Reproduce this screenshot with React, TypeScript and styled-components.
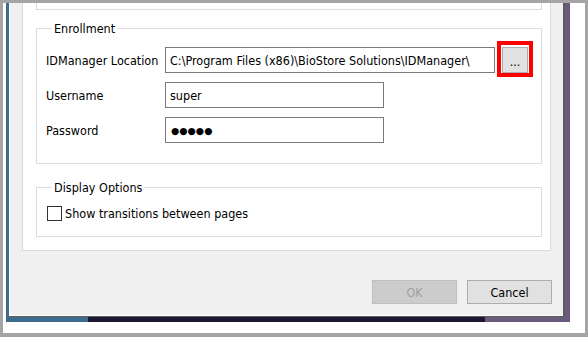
import React, { FC } from 'react';
import styled, { createGlobalStyle } from 'styled-components';

const GlobalStyle = createGlobalStyle`
  html, body {
    margin: 0;
    padding: 0;
  }
  body {
    width: 588px;
    height: 337px;
    overflow: hidden;
    font-family: 'DejaVu Sans Condensed', 'DejaVu Sans', sans-serif;
    font-size: 12.5px;
    color: #000;
  }
`;

const Frame = styled.div`
  box-sizing: border-box;
  width: 588px;
  height: 337px;
  display: flex;
  border: 3px solid #a5a5a5;
  border-bottom-width: 4px;
  background: #fff;
  padding: 0 15px 11px 3px;
`;

const Desktop = styled.div`
  flex: 1;
  display: flex;
  padding: 0 5px 5px 3px;
  background: linear-gradient(
    to right,
    #3c6b8d 0 82px,
    #1c1631 82px 479px,
    #6b5b7e 479px
  );
`;

const Dialog = styled.div`
  flex: 1;
  display: flex;
  flex-direction: column;
  background: #f0f0f0;
  border-right: 2px solid #5c5c5c;
  border-bottom: 1px solid #5c5c5c;
  box-shadow: inset 1px 0 #fff, inset 0 -1px #fff;
  padding: 0 12px 12px 13px;
`;

const Page = styled.div`
  display: flex;
  flex-direction: column;
  background: #fff;
  border: 1px solid #dadada;
  border-top: none;
  padding: 0 8px 13px 13px;
`;

const CutGroup = styled.div`
  height: 6px;
  border: 1px solid #dcdcdc;
  border-top: none;
`;

const Group = styled.fieldset<{ $top: number; $bottom: number }>`
  margin: ${(p) => p.$top}px 0 0 0;
  padding: 10px 10px ${(p) => p.$bottom}px 9px;
  border: 1px solid #dcdcdc;
  min-width: 0;
`;

const Legend = styled.legend`
  margin-left: 6px;
  padding: 0 2px;
  line-height: 17px;
`;

const Fields = styled.div`
  display: grid;
  grid-template-columns: 119px auto;
  row-gap: 9px;
  align-items: center;
  justify-items: start;
`;

const Label = styled.span`
  white-space: nowrap;
`;

const FieldLine = styled.div`
  display: flex;
  align-items: center;
  gap: 7px;
`;

const TextBox = styled.div<{ $width: number }>`
  box-sizing: border-box;
  width: ${(p) => p.$width}px;
  height: 26px;
  display: flex;
  align-items: center;
  padding: 0 4px;
  border: 1px solid #7a7a7a;
  background: #fff;
  white-space: nowrap;
  overflow: hidden;
`;

const Dots = styled.span`
  font-family: 'DejaVu Sans', sans-serif;
  font-size: 9.5px;
  padding-left: 1px;
`;

const BrowseButton = styled.div`
  position: relative;
  box-sizing: border-box;
  width: 26px;
  height: 26px;
  display: flex;
  align-items: flex-end;
  justify-content: center;
  padding-bottom: 4px;
  background: #e1e1e1;
  border: 1px solid #adadad;
  line-height: 12px;

  &::after {
    content: '';
    position: absolute;
    top: -7px;
    left: -6px;
    right: -6px;
    bottom: -5px;
    border: 4px solid #ff0000;
  }
`;

const CheckRow = styled.label`
  display: flex;
  align-items: center;
  gap: 3px;
  margin-left: 1px;
`;

const CheckBox = styled.span`
  box-sizing: border-box;
  width: 15px;
  height: 15px;
  border: 1px solid #333;
  background: #fff;
`;

const Buttons = styled.div`
  display: flex;
  justify-content: flex-end;
  gap: 10px;
  margin-top: 29px;
  margin-right: -1px;
`;

const DialogButton = styled.div<{ $disabled?: boolean }>`
  box-sizing: border-box;
  width: 85px;
  height: 24px;
  display: flex;
  align-items: center;
  justify-content: center;
  background: ${(p) => (p.$disabled ? '#cccccc' : '#e1e1e1')};
  border: 1px solid ${(p) => (p.$disabled ? '#bfbfbf' : '#adadad')};
  color: ${(p) => (p.$disabled ? '#a0a0a0' : '#000')};
`;

const App: FC = () => {
  return (
    <>
      <GlobalStyle />
      <Frame>
        <Desktop>
          <Dialog>
            <Page>
              <CutGroup />
              <Group $top={10} $bottom={20}>
                <Legend>Enrollment</Legend>
                <Fields>
                  <Label>IDManager Location</Label>
                  <FieldLine>
                    <TextBox $width={330}>
                      C:\Program Files (x86)\BioStore Solutions\IDManager\
                    </TextBox>
                    <BrowseButton>...</BrowseButton>
                  </FieldLine>
                  <Label>Username</Label>
                  <TextBox $width={219}>super</TextBox>
                  <Label>Password</Label>
                  <TextBox $width={219}>
                    <Dots>●●●●●</Dots>
                  </TextBox>
                </Fields>
              </Group>
              <Group $top={15} $bottom={15}>
                <Legend>Display Options</Legend>
                <CheckRow>
                  <CheckBox />
                  Show transitions between pages
                </CheckRow>
              </Group>
            </Page>
            <Buttons>
              <DialogButton $disabled>OK</DialogButton>
              <DialogButton>Cancel</DialogButton>
            </Buttons>
          </Dialog>
        </Desktop>
      </Frame>
    </>
  );
};

export default App;
